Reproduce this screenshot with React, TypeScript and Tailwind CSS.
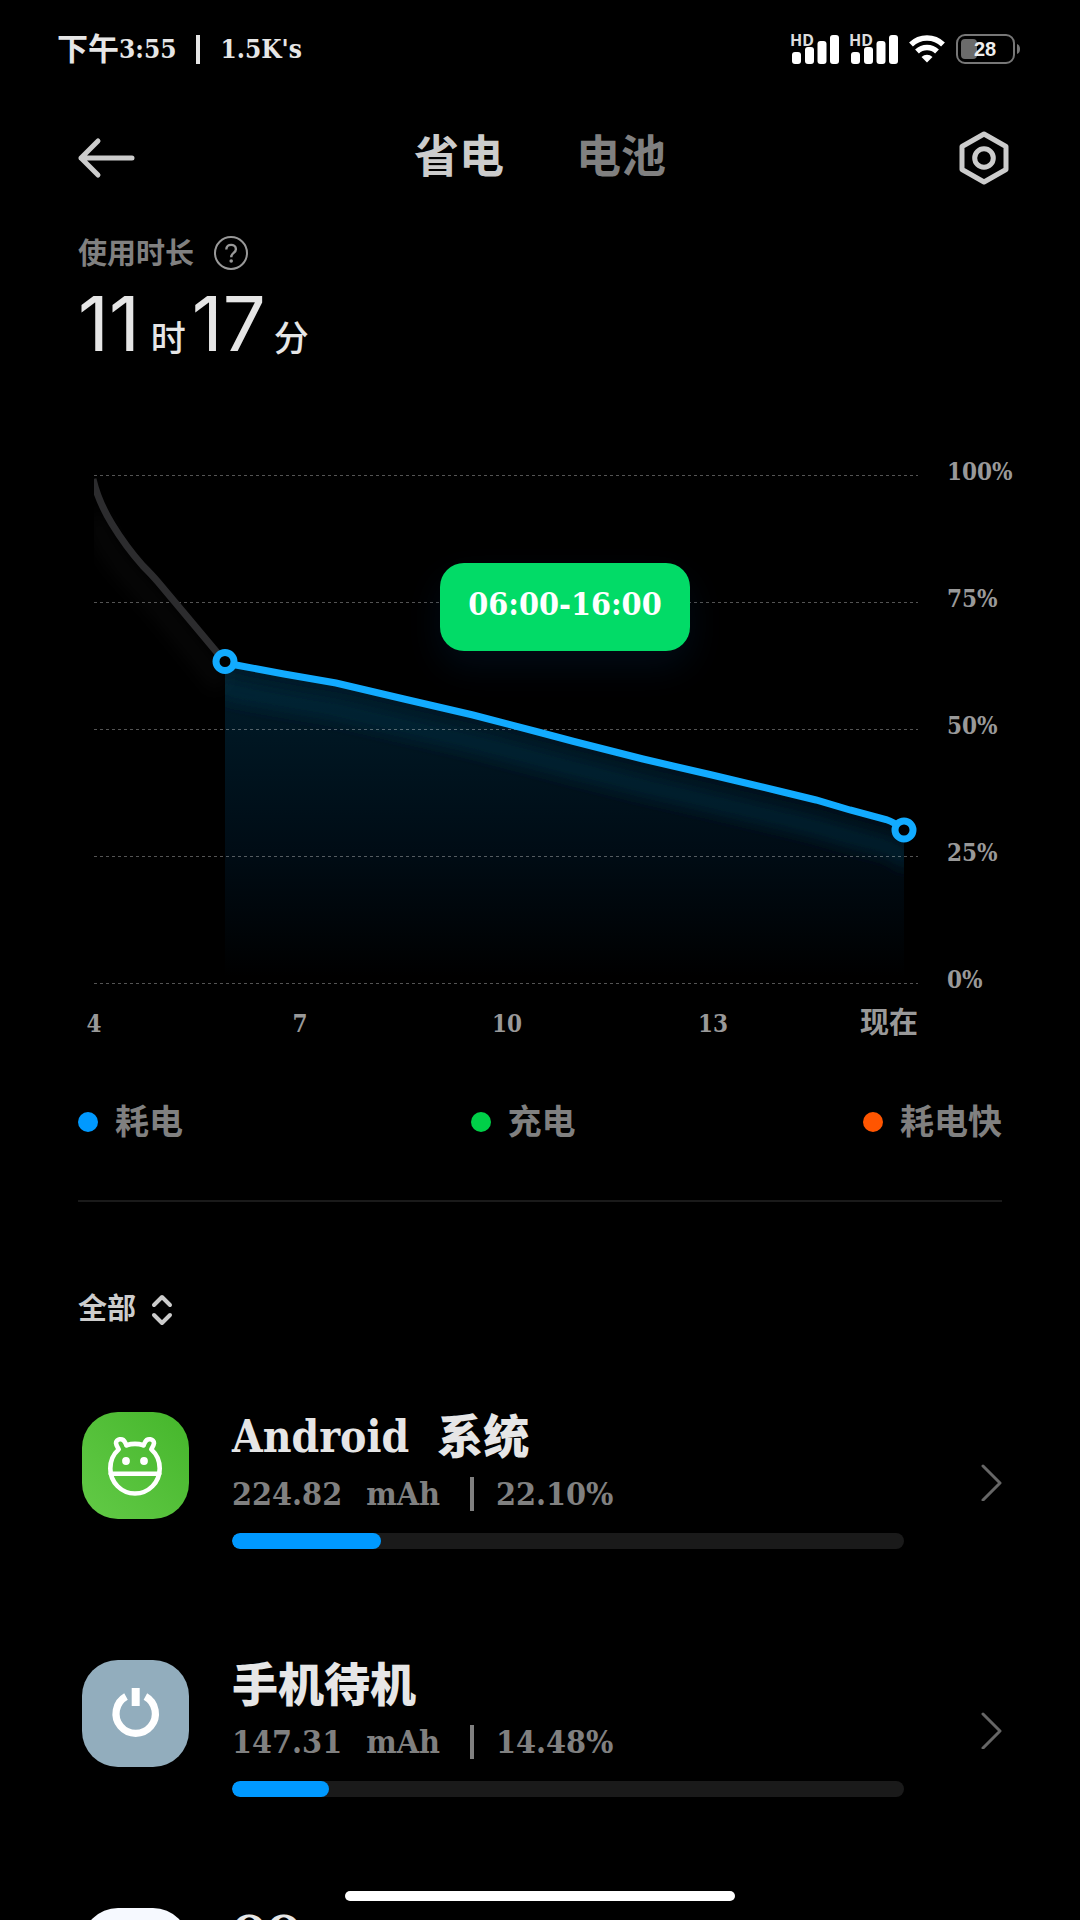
/**
 * Battery usage screen: remaining-charge chart, legend and per-app consumption list.
 */
import React, { useState } from 'react';
import { clsx } from 'clsx';

type TabId = 'saver' | 'battery';

interface AppUsage {
  id: string;
  name: { text: string; cjk?: boolean }[];
  usage?: { mah: string; percent: number };
  tile: string;
  icon?: React.ReactNode;
}

const AndroidIcon = () => (
  <svg viewBox="0 0 107 107" className="w-full" fill="none" stroke="#fff" strokeWidth="4.600" strokeLinecap="round" strokeLinejoin="round">
    <path d="M44.500 33.200Q53 30.500 61.500 33.200" />
    <path d="M44.500 33.200l-1.500-3c-2.200-4.800-9.200-3.200-9 1 .1 1.800 1.200 3.600 2.700 6.200C31.500 42 28.300 49 28.300 56.500 28.300 70.500 39.500 81.500 53 81.500S77.700 70.500 77.700 56.500c0-7.500-3.200-14.500-8.400-19.100 1.500-2.600 2.600-4.400 2.700-6.200.2-4.200-6.800-5.800-9-1l-1.500 3" />
    <path d="M28.800 61.700h48.400" />
    <circle cx="44" cy="49" r="3.900" fill="#fff" stroke="none" />
    <circle cx="62" cy="49" r="3.900" fill="#fff" stroke="none" />
  </svg>
);

const PowerIcon = () => (
  <svg viewBox="0 0 107 107" className="w-full" fill="none" stroke="#fff" strokeWidth="7.200">
    <path d="M44 36.500A19.700 19.700 0 1 0 63.400 36.500" />
    <path d="M53.700 28v18" strokeWidth="8" />
  </svg>
);

const apps: AppUsage[] = [
  {
    id: 'android',
    name: [{ text: 'Android' }, { text: '系统', cjk: true }],
    usage: { mah: '224.82', percent: 22.1 },
    tile: 'bg-linear-to-tr from-[#62ca46] to-[#45b62b]',
    icon: <AndroidIcon />,
  },
  {
    id: 'standby',
    name: [{ text: '手机待机', cjk: true }],
    usage: { mah: '147.31', percent: 14.48 },
    tile: 'bg-[#92adbd]',
    icon: <PowerIcon />,
  },
  {
    id: 'qq',
    name: [{ text: 'QQ' }],
    tile: 'bg-[#f6f9ff]',
  },
];

const legend = [
  { label: '耗电', dot: 'bg-[#0099ff]' },
  { label: '充电', dot: 'bg-[#00d048]' },
  { label: '耗电快', dot: 'bg-[#ff5500]' },
];

const SignalIcon = () => (
  <svg width="50" height="32" viewBox="0 0 50 32" fill="#fff" className="overflow-visible">
    <rect x="2" y="19" width="9" height="12" rx="3" />
    <rect x="15" y="14" width="9" height="17" rx="3" />
    <rect x="27.500" y="8" width="9" height="23" rx="3" />
    <rect x="40" y="2" width="9" height="29" rx="3" />
    <text x="0" y="13" fontSize="16" fill="#ddd" stroke="#000" strokeWidth="2" paintOrder="stroke" className="font-['Noto_Sans'] font-bold">HD</text>
  </svg>
);

const StatusBar = () => (
  <div className="flex h-[98px] items-center justify-between px-[57px]">
    <div className="flex items-center text-[26px] text-[#e6e6e6]">
      <span className="text-[31px]">下午</span>
      <span>3:55</span>
      <span className="mx-[20px] h-[29px] w-[4px] bg-[#e6e6e6]" />
      <span>1.5K's</span>
    </div>
    <div className="flex items-center gap-[9px]">
      <SignalIcon />
      <SignalIcon />
      <svg width="38" height="30" viewBox="0 0 38 30" fill="none" stroke="#fff" strokeWidth="5.500">
        <path d="M3 10.500a23 23 0 0 1 32 0" />
        <path d="M9 17.500a14.500 14.500 0 0 1 20 0" />
        <path d="M19 28.500l-5.500-5.500a8 8 0 0 1 11 0z" fill="#fff" stroke="none" />
      </svg>
      <svg width="68" height="32" viewBox="0 0 68 32">
        <rect x="2" y="2" width="57" height="28" rx="8" fill="none" stroke="#777" strokeWidth="2" />
        <rect x="6" y="6" width="16" height="20" rx="4" fill="#6b6b6b" />
        <path d="M62 11q3 1 3 5t-3 5z" fill="#777" />
        <text x="30" y="23" textAnchor="middle" fontSize="20" fill="#eee" className="font-['Liberation_Sans'] font-bold">28</text>
      </svg>
    </div>
  </div>
);

const gridLines = [
  { y: 18.5, label: '100%' },
  { y: 145.5, label: '75%' },
  { y: 272.5, label: '50%' },
  { y: 399.5, label: '25%' },
  { y: 526.5, label: '0%' },
];

const hours = [
  { x: 16, label: '4' },
  { x: 222, label: '7' },
  { x: 429, label: '10' },
  { x: 635, label: '13' },
];

const curve = 'M147 204.500L158 208L206 217L258 226L326 242L395 258L464 276L496 284.500L565 302L634 318L703 334.500L738 343L772 353L808 362.500Q818 366 826 373';

const UsageChart = () => (
  <div className="relative">
    <svg viewBox="0 0 924 583" className="w-full overflow-visible">
      <defs>
        <linearGradient id="area" x1="0" y1="0" x2="0" y2="1">
          <stop offset="0" stopColor="#001d2b" />
          <stop offset="0.600" stopColor="#000c15" />
          <stop offset="1" stopColor="#000000" />
        </linearGradient>
        <filter id="glow" x="-10%" y="-30%" width="120%" height="160%">
          <feGaussianBlur stdDeviation="8" />
        </filter>
        <clipPath id="areaClip">
          <path d={`${curve}V520H147Z`} />
        </clipPath>
        <clipPath id="plotClip">
          <rect x="16" y="0" width="824" height="530" />
        </clipPath>
      </defs>

      <path d={`${curve}V520H147Z`} fill="url(#area)" />
      <g clipPath="url(#areaClip)">
        <path d={curve} transform="translate(0 27)" fill="none" stroke="#082c3f" strokeOpacity="0.600" strokeWidth="18" strokeLinecap="square" filter="url(#glow)" />
      </g>

      {gridLines.map((line) => (
        <g key={line.label}>
          <line x1="16" x2="840" y1={line.y} y2={line.y} stroke="#fff" strokeOpacity="0.330" strokeDasharray="3 3" />
          <text x="869" y={line.y + 4} fontSize="24" fill="#999">{line.label}</text>
        </g>
      ))}

      <g clipPath="url(#plotClip)" fill="none" strokeWidth="7">
        <path d="M16 60Q28 92 46 112T82 152L144 228" stroke="#fff" strokeOpacity="0.022" strokeWidth="22" filter="url(#glow)" />
        <path d="M15 22Q20 44 34 67T65 109Q74 118 80 125L101 150L147 205" stroke="#2c2c2e" />
        <path d={curve} stroke="#12abff" />
      </g>
      <circle cx="147" cy="204.500" r="9" fill="#000" stroke="#12abff" strokeWidth="7" />
      <circle cx="826" cy="373" r="9" fill="#000" stroke="#12abff" strokeWidth="7" />

      {hours.map((hour) => (
        <text key={hour.label} x={hour.x} y="575" textAnchor="middle" fontSize="24" fill="#999">{hour.label}</text>
      ))}
      <text x="840" y="576" textAnchor="end" fontSize="29" fill="#999">现在</text>
    </svg>
    {/* selected range bubble floating over the plot */}
    <div className="absolute top-[18.200%] left-[39.200%] rounded-[24px] bg-[#02db67] px-[28px] pt-[19px] pb-[25px] text-[32px] leading-[44px] text-white shadow-[0_16px_36px_rgba(10,50,100,0.220)]">
      06:00-16:00
    </div>
  </div>
);

const UsageRow: React.FC<{ app: AppUsage }> = ({ app }) => (
  <li>
    <button className="flex w-full items-center text-left">
      <span className={clsx('ml-[4px] size-[107px] shrink-0 self-start rounded-[36px]', app.tile)}>{app.icon}</span>
      <span className="ml-[43px] flex-1 self-start">
        <span className="flex h-[50px] items-center gap-[28px] leading-[50px] text-[#e6e6e6]">
          {app.name.map((part) => (
            <span key={part.text} className={part.cjk ? 'text-[46px] font-black' : 'text-[44px]'}>{part.text}</span>
          ))}
        </span>
        {app.usage && (
          <>
            <span className="mt-[12px] flex h-[40px] items-center text-[32px] text-[#808080]">
              <span>{app.usage.mah}</span>
              <span className="ml-[24px]">mAh</span>
              <span className="mr-[22px] ml-[30px] h-[34px] w-[4px] bg-[#808080]" />
              <span>{app.usage.percent.toFixed(2)}%</span>
            </span>
            <span className="mt-[19px] block h-[16px] overflow-hidden rounded-full bg-[#1a1a1a]">
              <span className="block h-full rounded-full bg-[#0099ff]" style={{ width: `${app.usage.percent}%` }} />
            </span>
          </>
        )}
      </span>
      <svg width="24" height="40" viewBox="0 0 24 40" fill="none" stroke="#666" strokeWidth="3" strokeLinecap="round" strokeLinejoin="round" className="ml-[74px] shrink-0">
        <path d="M5 5l17 17L5 39" />
      </svg>
    </button>
  </li>
);

export default function App() {
  const [tab, setTab] = useState<TabId>('saver');

  return (
    <div className="h-screen overflow-hidden bg-black font-['DejaVu_Serif_Condensed','DejaVu_Serif','Noto_Sans_CJK_SC',serif] font-bold text-[#e6e6e6]">
      <StatusBar />

      <header className="flex h-[120px] items-center justify-between pr-[68px] pl-[76px]">
        <button aria-label="返回" className="w-[60px]">
          <svg width="60" height="44" viewBox="0 0 60 44" fill="none" stroke="#ccc" strokeWidth="5" strokeLinecap="round" strokeLinejoin="round">
            <path d="M22 5L5 22l17 17M5 22h51" />
          </svg>
        </button>
        <nav className="flex gap-[72px] text-[45px] leading-[60px]">
          <button onClick={() => setTab('saver')} className={tab === 'saver' ? 'text-[#ccc]' : 'text-[#808080]'}>省电</button>
          <button onClick={() => setTab('battery')} className={tab === 'battery' ? 'text-[#ccc]' : 'text-[#808080]'}>电池</button>
        </nav>
        <button aria-label="设置" className="flex w-[68px] justify-end">
          <svg width="56" height="60" viewBox="0 0 56 60" fill="none" stroke="#ccc" strokeWidth="5" strokeLinejoin="round">
            <path d="M28 6l22 12.500v23L28 54 6 41.500v-23z" />
            <circle cx="28" cy="30" r="9.300" />
          </svg>
        </button>
      </header>

      <main className="px-[78px]">
        <section>
          <div className="mt-[18px] flex h-[36px] items-center gap-[19px] text-[#808080]">
            <h2 className="text-[29px] leading-[36px]">使用时长</h2>
            <button aria-label="说明">
              <svg width="36" height="36" viewBox="0 0 36 36" fill="none" stroke="#999" strokeWidth="2">
                <circle cx="18" cy="17" r="16" />
                <path d="M13.300 13.500c0-6.300 9.600-6 9.600-.3 0 3.800-4.700 3.600-4.700 8" strokeWidth="2.400" />
                <circle cx="18.200" cy="25" r="1.800" fill="#999" stroke="none" />
              </svg>
            </button>
          </div>
          <p className="mt-[3px] flex h-[84px] items-baseline font-['Inter','Noto_Sans_CJK_SC',sans-serif] leading-[96px] font-medium">
            <span className="text-[76px] font-normal">11</span>
            <span className="ml-[11px] text-[35px]">时</span>
            <span className="ml-[6px] text-[76px] font-normal">17</span>
            <span className="ml-[8px] text-[35px]">分</span>
          </p>
        </section>

        <section className="mt-[98px]">
          <UsageChart />
          <ul className="mt-[62px] flex justify-between text-[34px] leading-[40px] text-[#808080]">
            {legend.map((item) => (
              <li key={item.label} className="flex items-center gap-[17px]">
                <span className={clsx('size-[20px] rounded-full', item.dot)} />
                {item.label}
              </li>
            ))}
          </ul>
        </section>

        <hr className="mt-[58px] border-t-2 border-[#1a1a1a]" />

        <section>
          <button className="mt-[88px] flex h-[40px] items-center gap-[14px] text-[29px] text-[#ccc]">
            全部
            <svg width="24" height="32" viewBox="0 0 24 32" fill="none" stroke="#ccc" strokeWidth="4" strokeLinecap="round" strokeLinejoin="round">
              <path d="M4 11l8-8 8 8M4 21l8 8 8-8" />
            </svg>
          </button>
          <ul className="mt-[82px] space-y-[111px]">
            {apps.map((app) => (
              <UsageRow key={app.id} app={app} />
            ))}
          </ul>
        </section>
      </main>

      <div className="fixed bottom-[19px] left-1/2 h-[10px] w-[390px] -translate-x-1/2 rounded-full bg-white" />
    </div>
  );
}
